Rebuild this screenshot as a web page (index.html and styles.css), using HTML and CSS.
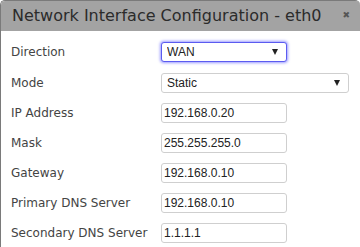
FILE: index.html
```html
<!DOCTYPE html>
<html lang="en">
<head>
  <meta charset="UTF-8">
  <meta name="viewport" content="width=device-width, initial-scale=1.0">
  <title>Network Interface Configuration</title>
  <link rel="stylesheet" href="styles.css">
</head>
<body>
<div class="dialog">
  <div class="dialog-header">
    <span class="dialog-title">Network Interface Configuration - eth0</span>
    <span class="close-btn">&#x2716;</span>
  </div>
  <form class="dialog-body">
    <label for="direction">Direction</label>
    <div class="select-wrap short">
      <select id="direction" class="focused">
        <option>WAN</option>
        <option>LAN</option>
      </select>
    </div>

    <label for="mode">Mode</label>
    <div class="select-wrap">
      <select id="mode">
        <option>Static</option>
        <option>DHCP</option>
      </select>
    </div>

    <label for="ip">IP Address</label>
    <input type="text" id="ip" value="192.168.0.20">

    <label for="mask">Mask</label>
    <input type="text" id="mask" value="255.255.255.0">

    <label for="gateway">Gateway</label>
    <input type="text" id="gateway" value="192.168.0.10">

    <label for="dns1">Primary DNS Server</label>
    <input type="text" id="dns1" value="192.168.0.10">

    <label for="dns2">Secondary DNS Server</label>
    <input type="text" id="dns2" value="1.1.1.1">
  </form>
</div>
</body>
</html>
```

FILE: styles.css
```css
* {
  margin: 0;
  padding: 0;
  box-sizing: border-box;
}

body {
  background-color: #fff;
  font-family: 'DejaVu Sans', Verdana, sans-serif;
}

.dialog {
  border: 1px solid #7a7a7a;
  border-right: none;
  border-bottom: none;
  border-radius: 5px 5px 0 0;
  min-height: 247px;
  background-color: #fff;
}

.dialog-header {
  display: flex;
  justify-content: space-between;
  align-items: flex-start;
  height: 30px;
  padding: 5px 10px 0 11px;
  background-color: #a3a3a3;
  border-radius: 4px 4px 0 0;
}

.dialog-title {
  font-size: 16px;
  color: #2b2b2b;
}

.close-btn {
  font-size: 9px;
  color: #555;
  margin-top: 4px;
}

.dialog-body {
  display: grid;
  grid-template-columns: 150px 1fr;
  row-gap: 10px;
  align-items: center;
  padding: 10px 10px 0 10px;
}

label {
  font-size: 12px;
  color: #444;
}

input,
select {
  height: 20px;
  font-family: 'Liberation Sans', Arial, sans-serif;
  font-size: 12px;
  color: #222;
  border: 1px solid #cfcfcf;
  border-radius: 3px;
  background-color: #fff;
  outline: none;
}

input {
  width: 126px;
  padding: 0 2px;
}

.select-wrap {
  position: relative;
  width: 188px;
}

.select-wrap.short {
  width: 126px;
}

.select-wrap select {
  width: 100%;
  padding: 0 5px;
  appearance: none;
  -webkit-appearance: none;
}

.select-wrap::after {
  content: "";
  position: absolute;
  right: 9px;
  top: 8px;
  border-left: 3.5px solid transparent;
  border-right: 3.5px solid transparent;
  border-top: 6px solid #222;
  pointer-events: none;
}

select.focused {
  border-color: #5b5bf0;
  box-shadow: 0 0 3px 1px #9a9aff;
}
```
